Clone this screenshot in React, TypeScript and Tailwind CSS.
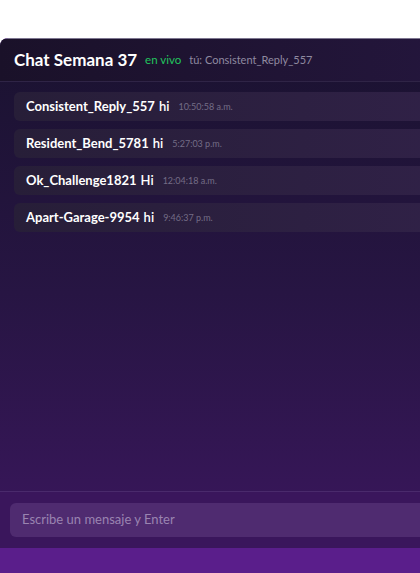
import React from "react";

const messages = [
  { user: "Consistent_Reply_557", text: "hi", time: "10:50:58 a.m." },
  { user: "Resident_Bend_5781", text: "hi", time: "5:27:03 p.m." },
  { user: "Ok_Challenge1821", text: "Hi", time: "12:04:18 a.m." },
  { user: "Apart-Garage-9954", text: "hi", time: "9:46:37 p.m." },
];

export default function App() {
  return (
    <div
      className="w-[420px] h-[573px] overflow-hidden bg-white"
      style={{ fontFamily: 'Lato, "Noto Sans", sans-serif' }}
    >
      <div className="h-[38px] bg-white" />
      <div className="h-[535px] rounded-tl-lg bg-[#5a1e8b] overflow-hidden">
        <div className="w-[460px] h-[510px] flex flex-col rounded-l-lg border-t border-[#7d7690] bg-gradient-to-b from-[#1a1230] via-[#271543] to-[#3a165d]">
          <div className="h-[43px] flex items-center gap-2 px-[14px] border-b border-[#2f2446] bg-gradient-to-r from-[#1a1129] to-[#24163d]">
            <span className="text-[17px] font-bold text-white">Chat Semana 37</span>
            <span className="text-[11.5px] text-[#22c55e]">en vivo</span>
            <span className="text-[11px] text-[#8f8aa0]">tú: Consistent_Reply_557</span>
          </div>
          <div className="flex-1 flex flex-col gap-2 px-[14px] pt-[10px]">
            {messages.map((m) => (
              <div
                key={m.user}
                className="h-[29px] rounded-md bg-gradient-to-r from-[#271e38] to-[#302147] flex items-center px-3 gap-[4px]"
              >
                <span className="text-[13px] font-bold text-white">{m.user}</span>
                <span className="text-[13px] font-semibold text-white">{m.text}</span>
                <span className="text-[9px] text-[#746d86] ml-[5px]">{m.time}</span>
              </div>
            ))}
          </div>
          <div className="border-t border-[#4a2a6c] px-[10px] pt-[11px] pb-[11px] bg-[#3a165c]">
            <div className="h-[34px] rounded-md bg-[#4f2b70] flex items-center px-3">
              <span className="text-[13px] text-[#9a84b0]">Escribe un mensaje y Enter</span>
            </div>
          </div>
        </div>
      </div>
    </div>
  );
}
